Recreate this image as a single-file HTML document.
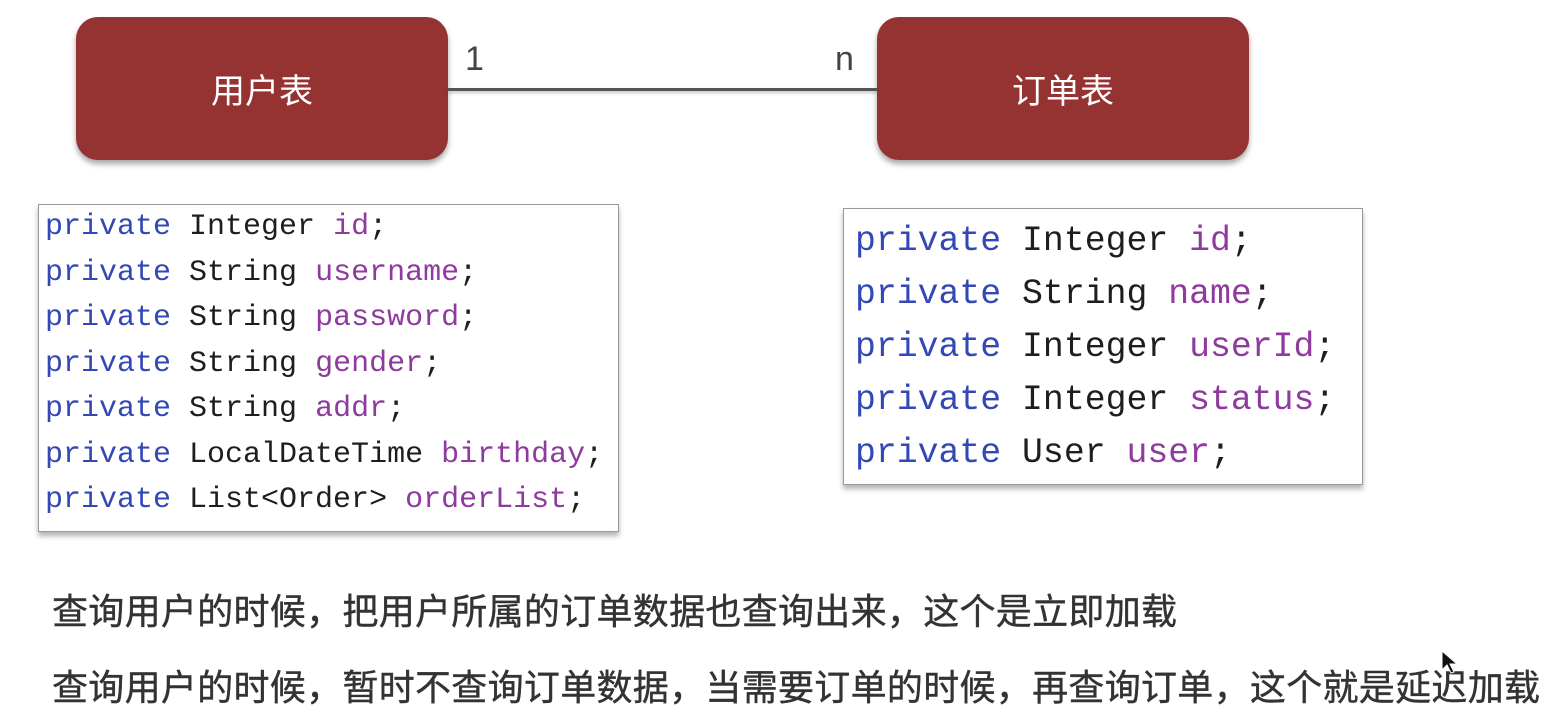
<!DOCTYPE html>
<html><head><meta charset="utf-8"><style>
*{margin:0;padding:0;box-sizing:border-box}
body{width:1549px;height:718px;background:#fff;position:relative;overflow:hidden;font-family:"Liberation Sans","Noto Sans CJK SC",sans-serif}
.box{position:absolute;top:17px;width:372px;height:143px;background:#953333;border-radius:22px;color:#fff;font-size:34px;display:flex;align-items:center;justify-content:center;box-shadow:0 4px 6px rgba(0,0,0,.35)}
.line{position:absolute;left:448px;top:88px;width:429px;height:3px;background:#555;box-shadow:0 2px 3px rgba(0,0,0,.25)}
.lab{position:absolute;font-size:34px;color:#444;top:40px}
.code{position:absolute;background:#fff;border:1.5px solid #999;box-shadow:0 4px 5px rgba(0,0,0,.3);font-family:"Liberation Mono",monospace;white-space:pre;color:#1e1e1e}
.k{color:#3348b4}.f{color:#8e3a9e}
.t{position:absolute;left:52px;font-size:36px;letter-spacing:0.3px;color:#333;white-space:nowrap;font-family:"Liberation Sans","Noto Sans CJK SC",sans-serif;-webkit-text-stroke:0.4px #333}
</style></head><body>
<div class="box" style="left:76px">用户表</div>
<div class="box" style="left:877px">订单表</div>
<div class="line"></div>
<div class="lab" style="left:465px">1</div>
<div class="lab" style="left:835px">n</div>
<div class="code" style="left:38px;top:204px;width:581px;height:328px;padding:0 0 0 6px;font-size:30px;line-height:45.5px"><span class="k">private</span> Integer <span class="f">id</span>;
<span class="k">private</span> String <span class="f">username</span>;
<span class="k">private</span> String <span class="f">password</span>;
<span class="k">private</span> String <span class="f">gender</span>;
<span class="k">private</span> String <span class="f">addr</span>;
<span class="k">private</span> LocalDateTime <span class="f">birthday</span>;
<span class="k">private</span> List&lt;Order&gt; <span class="f">orderList</span>;</div>
<div class="code" style="left:843px;top:208px;width:520px;height:277px;padding:6px 0 0 11px;font-size:34.8px;line-height:53px"><span class="k">private</span> Integer <span class="f">id</span>;
<span class="k">private</span> String <span class="f">name</span>;
<span class="k">private</span> Integer <span class="f">userId</span>;
<span class="k">private</span> Integer <span class="f">status</span>;
<span class="k">private</span> User <span class="f">user</span>;</div>
<div class="t" style="top:583px">查询用户的时候，把用户所属的订单数据也查询出来，这个是立即加载</div>
<div class="t" style="top:659px">查询用户的时候，暂时不查询订单数据，当需要订单的时候，再查询订单，这个就是延迟加载</div>
<svg style="position:absolute;left:1441px;top:650px" width="20" height="26" viewBox="0 0 20 26"><path d="M1 1 L1 20 L6 15 L10 23 L13 22 L9 14 L16 14 Z" fill="#111" stroke="#fff" stroke-width="1"/></svg>
</body></html>
